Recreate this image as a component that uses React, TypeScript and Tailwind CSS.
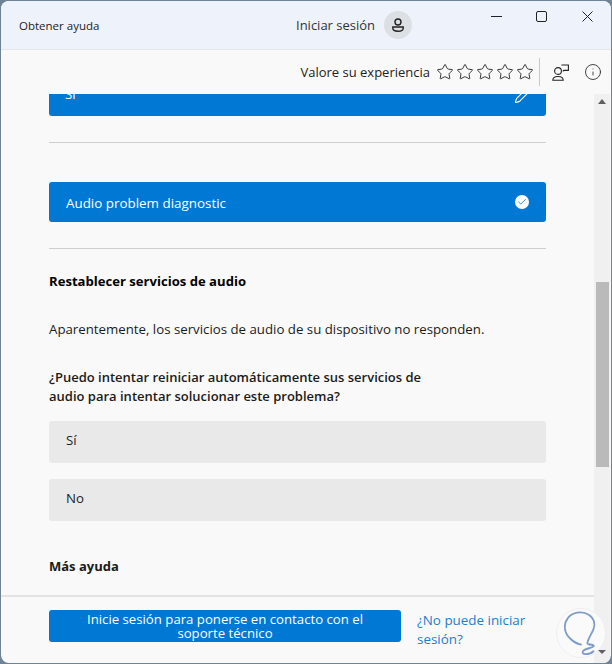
import { Check, Info, Pencil, Star } from 'lucide-react';

const font = "font-['Open_Sans','Noto_Sans',sans-serif]";

function Stars() {
  return (
    <div className="flex gap-[2px]">
      {[0, 1, 2, 3, 4].map((i) => (
        <Star key={i} className="w-[18px] h-[18px] text-[#222]" strokeWidth={1.2} />
      ))}
    </div>
  );
}

function WindowControls() {
  return (
    <div className="ml-auto flex items-center pr-[18px] -mt-[17px] text-[#222]">
      <svg viewBox="0 0 11 11" className="w-[11px] h-[11px]" fill="none" stroke="currentColor" strokeWidth="1">
        <path d="M0 5.5h11" />
      </svg>
      <svg viewBox="0 0 11 11" className="w-[11px] h-[11px] ml-[34px]" fill="none" stroke="currentColor" strokeWidth="1">
        <rect x="0.5" y="0.5" width="10" height="10" rx="1.5" />
      </svg>
      <svg viewBox="0 0 11 11" className="w-[11px] h-[11px] ml-[35px]" fill="none" stroke="currentColor" strokeWidth="1">
        <path d="M0.5 0.5l10 10M10.5 0.5l-10 10" />
      </svg>
    </div>
  );
}

export default function App() {
  return (
    <div className={`w-[612px] h-[664px] bg-[#6f8396] pt-px px-px pb-px ${font}`}>
      <div className="h-full flex flex-col rounded-lg overflow-hidden bg-[#f9f9f9] relative">
        <header className="h-[49px] shrink-0 bg-[#eef3fb] border-b border-[#e2e5ea] flex items-center pl-[18px] text-[#222]">
          <span className="text-[11.5px] w-[277px] mt-[2px]">Obtener ayuda</span>
          <span className="text-[13px] text-[#333] mt-[2px]">Iniciar sesión</span>
          <div className="ml-[9px] w-7 h-7 rounded-full bg-[#dcdfe3] flex items-center justify-center">
            <svg viewBox="0 0 16 16" className="w-4 h-4" fill="none" stroke="#222" strokeWidth="1.4">
              <circle cx="8" cy="5" r="3" />
              <path d="M2.8 10h10.4v1.2c0 2-2.2 3-5.2 3s-5.2-1-5.2-3z" />
            </svg>
          </div>
          <WindowControls />
        </header>

        <div className="h-[44px] shrink-0 flex items-center justify-end pr-[9px] text-[13px] text-[#222]">
          <span className="mr-[6px] mt-[2px]">Valore su experiencia</span>
          <Stars />
          <div className="w-px h-7 bg-[#c8c8c8] ml-[5px] mr-[12px]" />
          <svg viewBox="0 0 17 17" className="w-[17px] h-[17px] mr-[15px]" fill="none" stroke="#222" strokeWidth="1.1">
            <circle cx="6" cy="7" r="3.4" />
            <path d="M0.8 16.2c0-2.6 1.8-3.7 5.2-3.7s5.2 1.1 5.2 3.7z" />
            <path d="M9.4 1h7v5.4h-4.6l-1 1" />
          </svg>
          <Info className="w-[18px] h-[18px] text-[#222]" strokeWidth={1.1} />
        </div>

        <div className="flex-1 min-h-0 flex">
          <div className="flex-1 min-w-0 flex flex-col">
            <main className="flex-1 min-h-0 pl-[48px] pr-[48px] overflow-hidden text-[13.25px] text-[#1b1b1b]">
              <div className="h-[22px] bg-[#0078d4] rounded-b-[3px] text-white flex justify-between px-4 overflow-hidden">
                <span className="-mt-[9px]">Sí</span>
                <Pencil className="w-[17px] h-[17px] -mt-[7px] -mr-[1px]" strokeWidth={1.5} />
              </div>
              <hr className="mt-[26px] border-[#cfcfcf]" />
              <div className="mt-[39px] h-[40px] bg-[#0078d4] rounded-[3px] text-white flex items-center justify-between pl-[17px] pr-[17px]">
                <span className="text-[13.4px] mt-[2px]">Audio problem diagnostic</span>
                <span className="w-[14px] h-[14px] rounded-full bg-white flex items-center justify-center">
                  <Check className="w-[10px] h-[10px] text-[#0078d4]" strokeWidth={2} />
                </span>
              </div>
              <hr className="mt-[26px] border-[#cfcfcf]" />
              <h2 className="mt-[23px] font-bold text-[13.1px] text-black leading-[18px]">Restablecer servicios de audio</h2>
              <p className="mt-[30px] leading-[18px]">Aparentemente, los servicios de audio de su dispositivo no responden.</p>
              <p className="mt-[30px] font-semibold text-[13px] leading-[19px] w-[400px]">
                ¿Puedo intentar reiniciar automáticamente sus servicios de audio para intentar solucionar este problema?
              </p>
              <div className="mt-[15px] h-[42px] bg-[#e9e9e9] rounded-[3px] flex items-center px-[17px] pb-[2px]">Sí</div>
              <div className="mt-[16px] h-[42px] bg-[#e9e9e9] rounded-[3px] flex items-center px-[17px] pb-[2px]">No</div>
              <h2 className="mt-[36px] font-bold text-[13px] leading-[18px]">Más ayuda</h2>
            </main>
            <footer className="h-[68px] shrink-0 border-t-2 border-[#e3e3e3] flex pl-[48px] pt-[13px]">
              <button className="w-[352px] h-[32px] rounded-[3px] bg-[#0078d4] text-white text-[13.2px] leading-[14px] text-center px-4">
                Inicie sesión para ponerse en contacto con el soporte técnico
              </button>
              <a className="ml-[16px] mt-px w-[130px] text-[13.4px] leading-[19px] text-[#1a7fd0]">¿No puede iniciar sesión?</a>
            </footer>
          </div>
          <div className="w-[16px] mr-px shrink-0 bg-[#f0f0f0] flex flex-col items-center">
            <div className="mt-[5px] w-0 h-0 border-x-[4px] border-x-transparent border-b-[5px] border-b-[#5f5f5f]" />
            <div className="mt-[178px] h-[185px] w-[13px] bg-[#bababa]" />
          </div>
        </div>

        <div className="absolute right-[5px] bottom-[5px] w-[50px] h-[50px] rounded-full bg-[#fafafa] border border-[#eeeeee]">
          <svg viewBox="0 0 50 50" className="w-full h-full" fill="none" stroke="#7d9cc9" strokeWidth="1.9" strokeLinecap="round">
            <path d="M25 37C20 36 17 34 14 31 8 26 6 17 11 10c4-6 15-9 22-4 6 4 7 10 5 15-2 5-5 9-6 13-1 2 0 3 2 3" />
            <path d="M34 37c3 0 5 1 4 2-2 2-9 2-11 5-1 2 0 3 3 3 3 0 6-1 8-3" />
          </svg>
          <div className="absolute -right-[1px] bottom-[3px] w-0 h-0 border-x-[4px] border-x-transparent border-t-[4px] border-t-[#5f5f5f]" />
        </div>
      </div>
    </div>
  );
}
